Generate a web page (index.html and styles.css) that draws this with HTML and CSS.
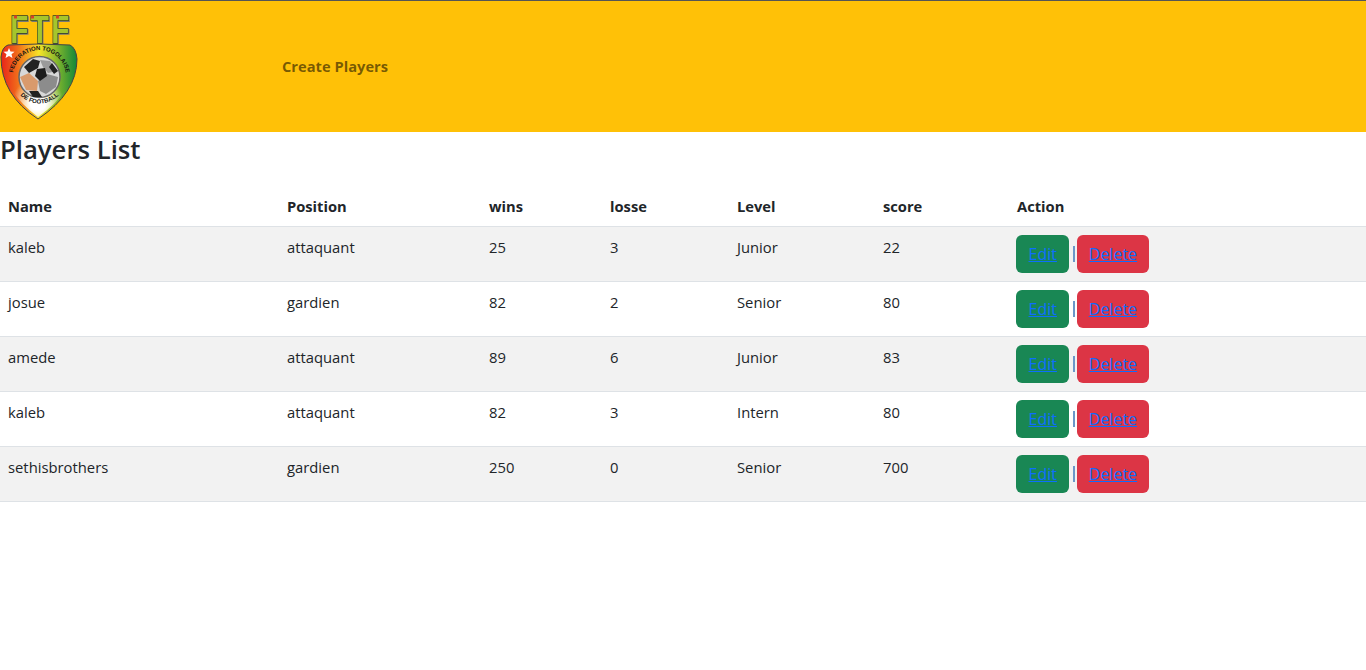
FILE: index.html
```html
<!DOCTYPE html>
<html lang="en">

<head>
  <meta charset="UTF-8" />
  <meta name="viewport" content="width=device-width, initial-scale=1.0" />
  <title>Players List</title>
  <link rel="stylesheet" href="styles.css">
</head>

<body>
  <nav class="topbar">
    <svg class="logo" viewBox="0 0 78 120" width="78" height="120">
      <defs>
        <linearGradient id="flag" x1="0" y1="0" x2="1" y2="0">
          <stop offset="0" stop-color="#e8231a" />
          <stop offset="0.2" stop-color="#f0661a" />
          <stop offset="0.5" stop-color="#f7e428" />
          <stop offset="0.78" stop-color="#6fae2e" />
          <stop offset="1" stop-color="#12863a" />
        </linearGradient>
        <radialGradient id="fade" gradientUnits="userSpaceOnUse" cx="38" cy="102" r="26">
          <stop offset="0.3" stop-color="#fff" stop-opacity="1" />
          <stop offset="1" stop-color="#fff" stop-opacity="0" />
        </radialGradient>
        <path id="ring-top" d="M13 80 A26.800 26.800 0 1 1 66 80" />
        <path id="ring-low" d="M17 90 A26.500 26.500 0 0 0 62 90" />
      </defs>
      <text class="logo-ftf" transform="translate(41 42) scale(.78 1)" text-anchor="middle">FTF</text>
      <rect class="logo-dot" x="14" y="14.500" width="3" height="3" />
      <rect class="logo-dot" x="31" y="14.500" width="3" height="3" />
      <rect class="logo-dot" x="56" y="14.500" width="3" height="3" />
      <path d="M1 56 Q2 46 8 44 Q38 42 70 44 Q76 47 77 58 Q77 92 38 118 Q1 94 1 56 Z" fill="url(#flag)" stroke="#444" stroke-width="1" />
      <path d="M3 58 Q3 90 38 116 Q75 90 75 58 Z" fill="url(#fade)" />
      <polygon points="9,47 10.500,50.500 14.500,50.800 11.500,53.200 12.500,57 9,55 5.500,57 6.500,53.200 3.500,50.800 7.500,50.500" fill="#fff" />
      <circle cx="39.500" cy="76" r="20.500" fill="#d8d8d8" stroke="#666" stroke-width="1.500" />
      <path d="M24 66 L33 58 L40 60 L38 67 L29 72 Z" fill="#222" />
      <path d="M40 59 L50 60 L57 70 L48 72 L43 66 Z" fill="#9a9a9a" />
      <path d="M20 76 L29 72 L38 80 L37 90 L26 89 Z" fill="#d99a6c" />
      <path d="M38 80 L47 73 L58 76 L56 86 L46 93 L40 90 Z" fill="#8c8c8c" />
      <path d="M37 68 L45 67 L47 75 L40 80 L35 75 Z" fill="#1c1c1c" />
      <path d="M29 90 L38 90 L42 96 L33 96 Z" fill="#222" />
      <path d="M52 62 L58 70 L54 73 L49 66 Z" fill="#222" />
      <text class="logo-ring"><textPath href="#ring-top" startOffset="50%" text-anchor="middle">FEDERATION TOGOLAISE</textPath></text>
      <text class="logo-ring"><textPath href="#ring-low" startOffset="50%" text-anchor="middle">DE FOOTBALL</textPath></text>
    </svg>
    <a class="nav-link" href="#">Create Players</a>
  </nav>

  <h2 class="page-title">Players List</h2>

  <table class="players">
    <colgroup>
      <col class="c-name"><col class="c-pos"><col class="c-wins"><col class="c-loss"><col class="c-level"><col class="c-score"><col>
    </colgroup>
    <thead>
      <tr><th>Name</th><th>Position</th><th>wins</th><th>losse</th><th>Level</th><th>score</th><th class="th-action">Action</th></tr>
    </thead>
    <tbody>
      <tr>
        <td>kaleb</td><td>attaquant</td><td>25</td><td>3</td><td>Junior</td><td>22</td>
        <td class="actions"><a class="btn btn-edit" href="#">Edit</a> <a class="sep" href="#"></a><a class="btn btn-delete" href="#">Delete</a></td>
      </tr>
      <tr>
        <td>josue</td><td>gardien</td><td>82</td><td>2</td><td>Senior</td><td>80</td>
        <td class="actions"><a class="btn btn-edit" href="#">Edit</a> <a class="sep" href="#"></a><a class="btn btn-delete" href="#">Delete</a></td>
      </tr>
      <tr>
        <td>amede</td><td>attaquant</td><td>89</td><td>6</td><td>Junior</td><td>83</td>
        <td class="actions"><a class="btn btn-edit" href="#">Edit</a> <a class="sep" href="#"></a><a class="btn btn-delete" href="#">Delete</a></td>
      </tr>
      <tr>
        <td>kaleb</td><td>attaquant</td><td>82</td><td>3</td><td>Intern</td><td>80</td>
        <td class="actions"><a class="btn btn-edit" href="#">Edit</a> <a class="sep" href="#"></a><a class="btn btn-delete" href="#">Delete</a></td>
      </tr>
      <tr>
        <td>sethisbrothers</td><td>gardien</td><td>250</td><td>0</td><td>Senior</td><td>700</td>
        <td class="actions"><a class="btn btn-edit" href="#">Edit</a> <a class="sep" href="#"></a><a class="btn btn-delete" href="#">Delete</a></td>
      </tr>
    </tbody>
  </table>
</body>
</html>
```

FILE: styles.css
```css
body {
    margin: 0;
    font-family: "Open Sans", "Noto Sans", sans-serif;
    font-size: 15px;
    line-height: 24px;
    color: #212529;
    background: #fff;
}

/* Top bar */
.topbar {
    display: flex;
    align-items: center;
    height: 131px;
    border-top: 1px solid #555;
    background: #ffc107;
}
.logo {
    flex: none;
    width: 78px;
    height: 120px;
    margin-bottom: 11px;
    overflow: visible;
}
.logo-ftf {
    font-family: "Liberation Sans", sans-serif;
    font-size: 38px;
    font-weight: 700;
    letter-spacing: 3px;
    fill: #a6c52c;
    stroke: #2f3b22;
    stroke-width: 1.500px;
    paint-order: stroke;
    filter: drop-shadow(1.500px 1px 0 #777);
}
.logo-dot {
    fill: #d8402a;
}
.logo-ring {
    font-family: "Liberation Sans", sans-serif;
    font-size: 6px;
    font-weight: 700;
    fill: #111;
}
.nav-link {
    margin-left: 204px;
    margin-bottom: 2px;
    color: rgba(0, 0, 0, .55);
    font-size: 14.700px;
    font-weight: 700;
    text-decoration: none;
}

.page-title {
    margin: 0 0 18px;
    font-size: 25.700px;
    font-weight: 600;
    line-height: 36px;
}

/* Table */
.players {
    width: 100%;
    table-layout: fixed;
    border-collapse: collapse;
}
.c-name { width: 279px; }
.c-pos { width: 202px; }
.c-wins { width: 121px; }
.c-loss { width: 127px; }
.c-level { width: 146px; }
.c-score { width: 133px; }

.players th,
.players td {
    padding: 8px;
    text-align: left;
    vertical-align: top;
    border-bottom: 1px solid #dee2e6;
}
.players th {
    font-size: 14.700px;
    font-weight: 700;
}
.players .th-action {
    padding-left: 9px;
}
.players td {
    font-size: 14.800px;
    line-height: 24px;
    height: 38px;
    box-sizing: content-box;
}
.players tbody tr:nth-child(odd) td {
    background: #f2f2f2;
}

/* Buttons */
.btn {
    display: inline-block;
    padding: 7px 12px;
    border-radius: 6px;
    font-size: 16px;
    line-height: 24px;
    color: #0d6efd;
    text-decoration: underline;
    vertical-align: middle;
}
.btn-edit {
    padding: 7px 12.500px;
    background: #198754;
}
.btn-delete {
    padding: 7px 11.500px;
    background: #dc3545;
}
.sep {
    display: inline-block;
    width: 2px;
    height: 16px;
    margin-right: 2px;
    background: #6c97c9;
    vertical-align: middle;
}
```
